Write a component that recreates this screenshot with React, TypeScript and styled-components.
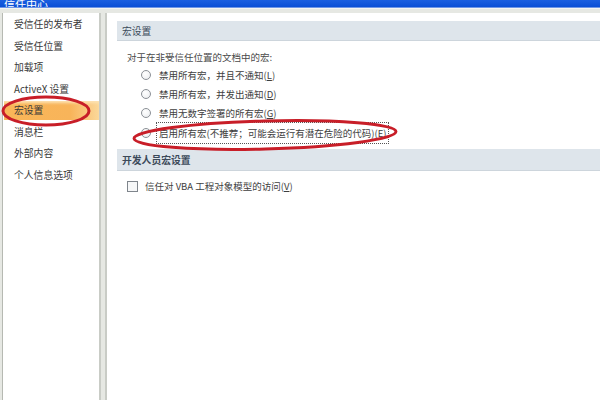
import React from "react";
import styled, { createGlobalStyle } from "styled-components";

const Global = createGlobalStyle`
  html, body { margin: 0; padding: 0; }
  body {
    width: 600px; height: 400px; overflow: hidden;
    background: #e6e8e3;
    font-family: "Microsoft YaHei", "Noto Sans CJK SC", "Liberation Sans", sans-serif;
  }
`;

const Window = styled.div`
  position: relative;
  width: 600px;
  height: 400px;
  display: flex;
  flex-direction: column;
  background: #e6e8e3;
  overflow: hidden;
`;

const TitleBar = styled.div`
  height: 7px;
  background: linear-gradient(#1a5fe0, #0a4fd6);
  border-bottom: 1px solid #6f97e6;
  overflow: hidden;
  display: flex;
  align-items: flex-end;
  padding-left: 4px;
`;

const TitleText = styled.span`
  color: #ffffff;
  font-size: 11px;
  line-height: 11px;
  margin-bottom: -3px;
`;

const Body = styled.div`
  flex: 1;
  display: flex;
  gap: 4px;
  padding: 4px 0 0 2px;
  border-top: 1px solid #f4f5f2;
`;

const Sidebar = styled.div`
  width: 96px;
  background: #ffffff;
  border-left: 1px solid #b6b9b2;
  border-right: 2px solid #c9ccc6;
  padding-top: 2px;
  display: flex;
  flex-direction: column;
  gap: 3px;
`;

const NavItem = styled.div<{ $active?: boolean }>`
  height: 18.5px;
  display: flex;
  align-items: center;
  padding-left: 10px;
  margin-left: 1px;
  font-size: 9.8px;
  color: #3a3a3a;
  background: ${(p) =>
    p.$active
      ? "linear-gradient(to right, #f9b658 0%, #f8b45a 70%, #fbd89a 100%)"
      : "transparent"};
  box-shadow: ${(p) => (p.$active ? "inset 0 3px 3px -1px #fde3b3" : "none")};
`;

const Main = styled.div`
  flex: 1;
  background: #ffffff;
  border-left: 2px solid #c9ccc6;
  padding: 8px 0 0 10px;
  display: flex;
  flex-direction: column;
`;

const SectionHeader = styled.div<{ $bold?: boolean }>`
  height: ${(p) => (p.$bold ? 21 : 19)}px;
  background: #dee5eb;
  border-bottom: 1px solid #cdd5dc;
  display: flex;
  align-items: center;
  padding-left: 5px;
  font-size: 9.8px;
  font-weight: ${(p) => (p.$bold ? 700 : 400)};
  color: #3c4a5a;
`;

const Group = styled.div<{ $top: number }>`
  padding: ${(p) => p.$top}px 0 7px 10px;
  display: flex;
  flex-direction: column;
`;

const Intro = styled.div`
  font-size: 9.5px;
  color: #4a4a4a;
  height: 17px;
  display: flex;
  align-items: center;
`;

const OptionRow = styled.div`
  height: 19.3px;
  display: flex;
  align-items: center;
  padding-left: 14px;
  gap: 6px;
  font-size: 9.5px;
  color: #3e3e3e;
`;

const Radio = styled.span`
  width: 8px;
  height: 8px;
  border-radius: 50%;
  border: 1px solid #8b9096;
  background: radial-gradient(circle at 40% 35%, #ffffff, #e9ebee);
  flex: none;
`;

const Label = styled.span<{ $focus?: boolean }>`
  padding: 3px 2px;
  outline: ${(p) => (p.$focus ? "1px dotted #555" : "none")};
  white-space: nowrap;
`;

const Key = styled.u``;

const CheckRow = styled.div`
  height: 22px;
  display: flex;
  align-items: center;
  gap: 7px;
  font-size: 9.5px;
  color: #3e3e3e;
`;

const Checkbox = styled.span`
  width: 9px;
  height: 9px;
  border: 1px solid #7f858c;
  background: #f6f7f8;
  flex: none;
`;

const Annotation = styled.svg`
  position: absolute;
  left: 0;
  top: 0;
  pointer-events: none;
`;

const navItems = [
  "受信任的发布者",
  "受信任位置",
  "加载项",
  "ActiveX 设置",
  "宏设置",
  "消息栏",
  "外部内容",
  "个人信息选项",
];

export default function App() {
  return (
    <>
      <Global />
      <Window>
        <TitleBar>
          <TitleText>信任中心</TitleText>
        </TitleBar>
        <Body>
          <Sidebar>
            {navItems.map((n) => (
              <NavItem key={n} $active={n === "宏设置"}>
                {n}
              </NavItem>
            ))}
          </Sidebar>
          <Main>
            <SectionHeader>宏设置</SectionHeader>
            <Group $top={7}>
              <Intro>对于在非受信任位置的文档中的宏:</Intro>
              <OptionRow>
                <Radio />
                <Label>
                  禁用所有宏，并且不通知(<Key>L</Key>)
                </Label>
              </OptionRow>
              <OptionRow>
                <Radio />
                <Label>
                  禁用所有宏，并发出通知(<Key>D</Key>)
                </Label>
              </OptionRow>
              <OptionRow>
                <Radio />
                <Label>
                  禁用无数字签署的所有宏(<Key>G</Key>)
                </Label>
              </OptionRow>
              <OptionRow>
                <Radio />
                <Label $focus>
                  启用所有宏(不推荐；可能会运行有潜在危险的代码)(<Key>E</Key>)
                </Label>
              </OptionRow>
            </Group>
            <SectionHeader $bold>开发人员宏设置</SectionHeader>
            <Group $top={4}>
              <CheckRow>
                <Checkbox />
                <span>
                  信任对 VBA 工程对象模型的访问(<Key>V</Key>)
                </span>
              </CheckRow>
            </Group>
          </Main>
        </Body>
        <Annotation width="600" height="400" viewBox="0 0 600 400">
          <ellipse
            cx="46"
            cy="111"
            rx="43"
            ry="14"
            fill="none"
            stroke="#c81e28"
            strokeWidth="3"
          />
          <ellipse
            cx="265"
            cy="135"
            rx="131"
            ry="14"
            fill="none"
            stroke="#c81e28"
            strokeWidth="3"
            transform="rotate(-1.5 265 135)"
          />
        </Annotation>
      </Window>
    </>
  );
}
